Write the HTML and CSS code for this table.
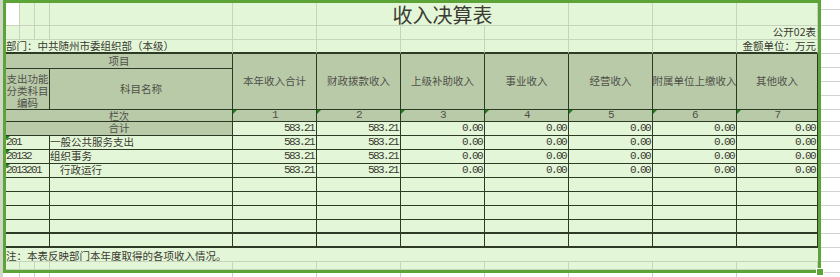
FILE: index.html
```html
<!DOCTYPE html>
<html lang="zh-CN">
<head>
<meta charset="utf-8">
<title>收入决算表</title>
<link rel="stylesheet" href="styles.css">
</head>
<body>
<div class="sheet">
  <div class="rowhead"></div>
  <div class="main">
    <div class="selbox">
      <div class="grid">
        <!-- row 1 -->
        <div class="c active"></div><div class="c"></div><div class="c"></div><div class="c"></div><div class="c"></div>
        <div class="c title s3">收入决算表</div>
        <div class="c"></div><div class="c"></div><div class="c"></div>
        <!-- row 2 -->
        <div class="c"></div><div class="c"></div><div class="c"></div><div class="c"></div><div class="c"></div><div class="c"></div><div class="c"></div><div class="c"></div><div class="c"></div><div class="c"></div>
        <div class="c right">公开02表</div>
        <!-- row 3 -->
        <div class="c s4 thick">部门：中共随州市委组织部（本级）</div>
        <div class="c thick"></div><div class="c thick"></div><div class="c thick"></div><div class="c thick"></div><div class="c thick"></div><div class="c thick"></div>
        <div class="c right thick">金额单位：万元</div>
        <!-- header -->
        <div class="c t h s4 center">项目</div>
        <div class="c t h r2 center">本年收入合计</div>
        <div class="c t h r2 center">财政拨款收入</div>
        <div class="c t h r2 center">上级补助收入</div>
        <div class="c t h r2 center">事业收入</div>
        <div class="c t h r2 center">经营收入</div>
        <div class="c t h r2 center">附属单位上缴收入</div>
        <div class="c t h r2 center">其他收入</div>
        <div class="c t h s3 center wrap">支出功能<br>分类科目<br>编码</div>
        <div class="c t h center">科目名称</div>
        <!-- 栏次 -->
        <div class="c t h s4 center small">栏次</div>
        <div class="c t h center num tri">1</div>
        <div class="c t h center num tri">2</div>
        <div class="c t h center num tri">3</div>
        <div class="c t h center num tri">4</div>
        <div class="c t h center num tri">5</div>
        <div class="c t h center num tri">6</div>
        <div class="c t h center num tri">7</div>
        <!-- 合计 -->
        <div class="c t h s4 center">合计</div>
        <div class="c t right num">583.21</div><div class="c t right num">583.21</div><div class="c t right num">0.00</div><div class="c t right num">0.00</div><div class="c t right num">0.00</div><div class="c t right num">0.00</div><div class="c t right num">0.00</div>
        <!-- data -->
        <div class="c t s3 num tri">201</div><div class="c t">一般公共服务支出</div>
        <div class="c t right num">583.21</div><div class="c t right num">583.21</div><div class="c t right num">0.00</div><div class="c t right num">0.00</div><div class="c t right num">0.00</div><div class="c t right num">0.00</div><div class="c t right num">0.00</div>
        <div class="c t s3 num tri">20132</div><div class="c t">组织事务</div>
        <div class="c t right num">583.21</div><div class="c t right num">583.21</div><div class="c t right num">0.00</div><div class="c t right num">0.00</div><div class="c t right num">0.00</div><div class="c t right num">0.00</div><div class="c t right num">0.00</div>
        <div class="c t s3 num tri">2013201</div><div class="c t indent">行政运行</div>
        <div class="c t right num">583.21</div><div class="c t right num">583.21</div><div class="c t right num">0.00</div><div class="c t right num">0.00</div><div class="c t right num">0.00</div><div class="c t right num">0.00</div><div class="c t right num">0.00</div>
        <!-- empty rows -->
        <div class="c t s3"></div><div class="c t"></div><div class="c t"></div><div class="c t"></div><div class="c t"></div><div class="c t"></div><div class="c t"></div><div class="c t"></div><div class="c t"></div>
        <div class="c t s3"></div><div class="c t"></div><div class="c t"></div><div class="c t"></div><div class="c t"></div><div class="c t"></div><div class="c t"></div><div class="c t"></div><div class="c t"></div>
        <div class="c t s3"></div><div class="c t"></div><div class="c t"></div><div class="c t"></div><div class="c t"></div><div class="c t"></div><div class="c t"></div><div class="c t"></div><div class="c t"></div>
        <div class="c t s3 thick"></div><div class="c t thick"></div><div class="c t thick"></div><div class="c t thick"></div><div class="c t thick"></div><div class="c t thick"></div><div class="c t thick"></div><div class="c t thick"></div><div class="c t thick"></div>
        <div class="c t s3 thick"></div><div class="c t thick"></div><div class="c t thick"></div><div class="c t thick"></div><div class="c t thick"></div><div class="c t thick"></div><div class="c t thick"></div><div class="c t thick"></div><div class="c t thick"></div>
        <!-- note -->
        <div class="c s11 note">注：本表反映部门本年度取得的各项收入情况。</div>
        <!-- last partial row -->
        <div class="c"></div><div class="c"></div><div class="c"></div><div class="c"></div><div class="c"></div><div class="c"></div><div class="c"></div><div class="c"></div><div class="c"></div><div class="c"></div><div class="c"></div>
      </div>
      <span class="handle"></span>
    </div>
    <div class="below">
      <div></div><div class="bl"></div><div class="bl"></div><div class="bl"></div><div class="bl"></div><div class="bl"></div><div class="bl"></div><div class="bl"></div><div class="bl"></div><div class="bl"></div><div class="bl"></div><div></div>
    </div>
  </div>
  <div class="rstrip">
    <div class="rl h10"></div><div class="rl h16"></div><div class="rl h14"></div><div class="rl h14"></div><div class="rl h14"></div><div class="rl h14"></div><div class="rl h14"></div><div class="rl h14"></div><div class="rl h12"></div>
    <div class="rl h14"></div><div class="rl h14"></div><div class="rl h14"></div><div class="rl h14"></div><div class="rl h14"></div><div class="rl h14"></div><div class="rl h14"></div><div class="rl h14"></div><div class="rl h14"></div><div class="rl h14"></div><div class="rl h11"></div>
  </div>
</div>
</body>
</html>
```

FILE: styles.css
```css
* { box-sizing: border-box; margin: 0; padding: 0; }
html, body { width: 840px; height: 277px; overflow: hidden; background: #ffffff; }
body {
  font-family: "Noto Sans CJK SC", "Noto Sans", sans-serif;
  font-size: 10.5px;
  color: #3a3a30;
}
.sheet { display: flex; height: 277px; }
.rowhead { width: 3px; height: 277px; background: #cfd8c6; }
.main { width: 818px; display: flex; flex-direction: column; }
.selbox {
  position: relative;
  height: 273px;
  border: 3px solid #5ca437;
  background: #e3f6d8;
}
.grid {
  display: grid;
  grid-template-columns: 14px 15px 15px 183px repeat(6, 84px) 81px;
  grid-template-rows: 23px 14px 14px 15px 41px 12px repeat(10, 14px) 8px;
  height: 267px;
  overflow: hidden;
}
.c {
  border-right: 1px solid #c6d4bb;
  border-bottom: 1px solid #c6d4bb;
  display: flex;
  align-items: center;
  white-space: nowrap;
  line-height: 1;
  min-width: 0;
}
.t { border-color: #2e3b24; }
.h { background: #b9caa9; color: #505048; }
.thick { border-bottom: 2px solid #2e3b24; }
.active { background: #ffffff; }
.s3 { grid-column: span 3; }
.s4 { grid-column: span 4; }
.s11 { grid-column: span 11; border-right: none; }
.r2 { grid-row: span 2; }
.center { justify-content: center; text-align: center; }
.right { justify-content: flex-end; padding-right: 1px; }
.wrap { white-space: normal; line-height: 12px; padding-top: 4px; }
.indent { padding-left: 10px; }
.small { font-size: 10px; padding-top: 1px; }
.title { justify-content: center; font-size: 20px; color: #3c3c34; padding-top: 1px; }
.num {
  font-family: "Liberation Mono", monospace;
  font-size: 11px;
  letter-spacing: -1.6px;
}
.right.num { padding-right: 2px; }
.note { padding-top: 3px; }
.tri { position: relative; }
.tri::before {
  content: "";
  position: absolute;
  left: 0;
  top: 0;
  border-top: 4px solid #1c7f1c;
  border-right: 4px solid transparent;
}
.handle {
  position: absolute;
  left: 810px;
  top: 265px;
  width: 8px;
  height: 8px;
  border: 1px solid #ffffff;
  background: #5ca437;
  z-index: 2;
}
.below {
  display: grid;
  grid-template-columns: 3px 14px 15px 15px 183px repeat(6, 84px) 81px 3px;
  height: 4px;
}
.bl { border-right: 1px solid #d0d0d0; }
.rstrip { width: 19px; display: flex; flex-direction: column; }
.rl { border-bottom: 1px solid #d2d2d2; }
.h10 { height: 10px; }
.h11 { height: 11px; }
.h12 { height: 12px; }
.h14 { height: 14px; }
.h16 { height: 16px; }
```
